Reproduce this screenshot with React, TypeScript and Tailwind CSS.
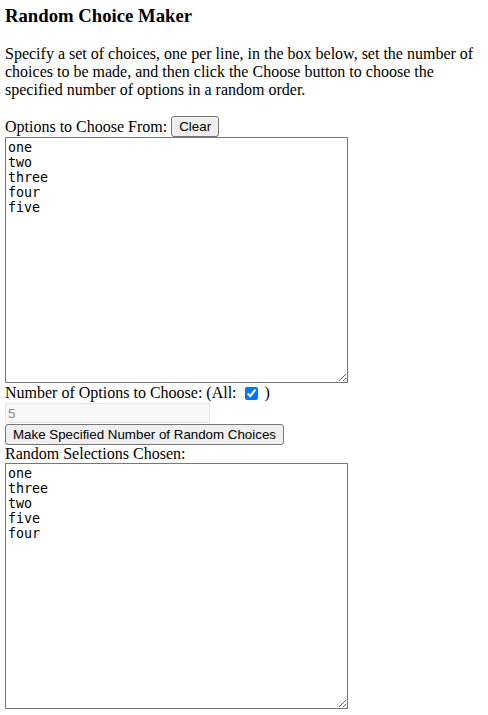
import { useState } from "react"

const btn =
  "h-[21px] rounded-[3px] border border-[#767676] bg-[#efefef] px-[7px] font-['Liberation_Sans',Arial,sans-serif] text-[13.33px] leading-[normal] text-black hover:bg-[#e5e5e5]"

const area =
  "block h-[246px] w-[343px] border border-[#767676] bg-white p-[2px] font-['DejaVu_Sans_Mono',monospace] text-[13.33px] leading-[15px] text-black"

function shuffle(items: string[]) {
  const out = [...items]
  for (let i = out.length - 1; i > 0; i--) {
    const j = Math.floor(Math.random() * (i + 1))
    ;[out[i], out[j]] = [out[j], out[i]]
  }
  return out
}

export default function App() {
  const [options, setOptions] = useState("one\ntwo\nthree\nfour\nfive")
  const [all, setAll] = useState(true)
  const [count, setCount] = useState("5")
  const [result, setResult] = useState("one\nthree\ntwo\nfive\nfour")

  const lines = options.split("\n").filter((l) => l.trim() !== "")
  const shown = all ? String(lines.length) : count

  const choose = () => {
    const n = all ? lines.length : Math.max(0, parseInt(count) || 0)
    setResult(shuffle(lines).slice(0, n).join("\n"))
  }

  return (
    <div className="min-h-screen bg-white p-[5px] font-['Liberation_Serif','Times_New_Roman',serif] text-base leading-[normal] text-black">
      <h3 className="mb-[18px] text-[18.72px] font-bold">Random Choice Maker</h3>

      <p className="mb-[17px]">
        Specify a set of choices, one per line, in the box below, set the number of choices to be made, and then click
        the Choose button to choose the specified number of options in a random order.
      </p>

      <div className="flex h-[21px] items-center">
        <span>Options to Choose From:</span>
        <button className={`${btn} ml-[4px]`} onClick={() => setOptions("")}>
          Clear
        </button>
      </div>
      <textarea className={area} value={options} onChange={(e) => setOptions(e.target.value)} />

      <div className="flex h-[20px] items-center">
        <span>Number of Options to Choose: (All:</span>
        <input
          type="checkbox"
          checked={all}
          onChange={(e) => setAll(e.target.checked)}
          className="mb-[3px] ml-[8px] mr-[7px] mt-[3px] h-[13px] w-[13px] accent-[#0075ff]"
        />
        <span>)</span>
      </div>
      <input
        type="text"
        disabled={all}
        value={shown}
        onChange={(e) => setCount(e.target.value)}
        className="block h-[20px] w-[205px] border border-[#e4e4e4] bg-[#f8f8f8] px-[2px] font-['Liberation_Sans',Arial,sans-serif] text-[13.33px] text-[#8a8a8a] enabled:border-[#767676] enabled:bg-white enabled:text-black"
      />
      <button className={`${btn} mt-[1px] block`} onClick={choose}>
        Make Specified Number of Random Choices
      </button>
      <div className="h-[18px]">Random Selections Chosen:</div>
      <textarea className={area} value={result} readOnly />
    </div>
  )
}
